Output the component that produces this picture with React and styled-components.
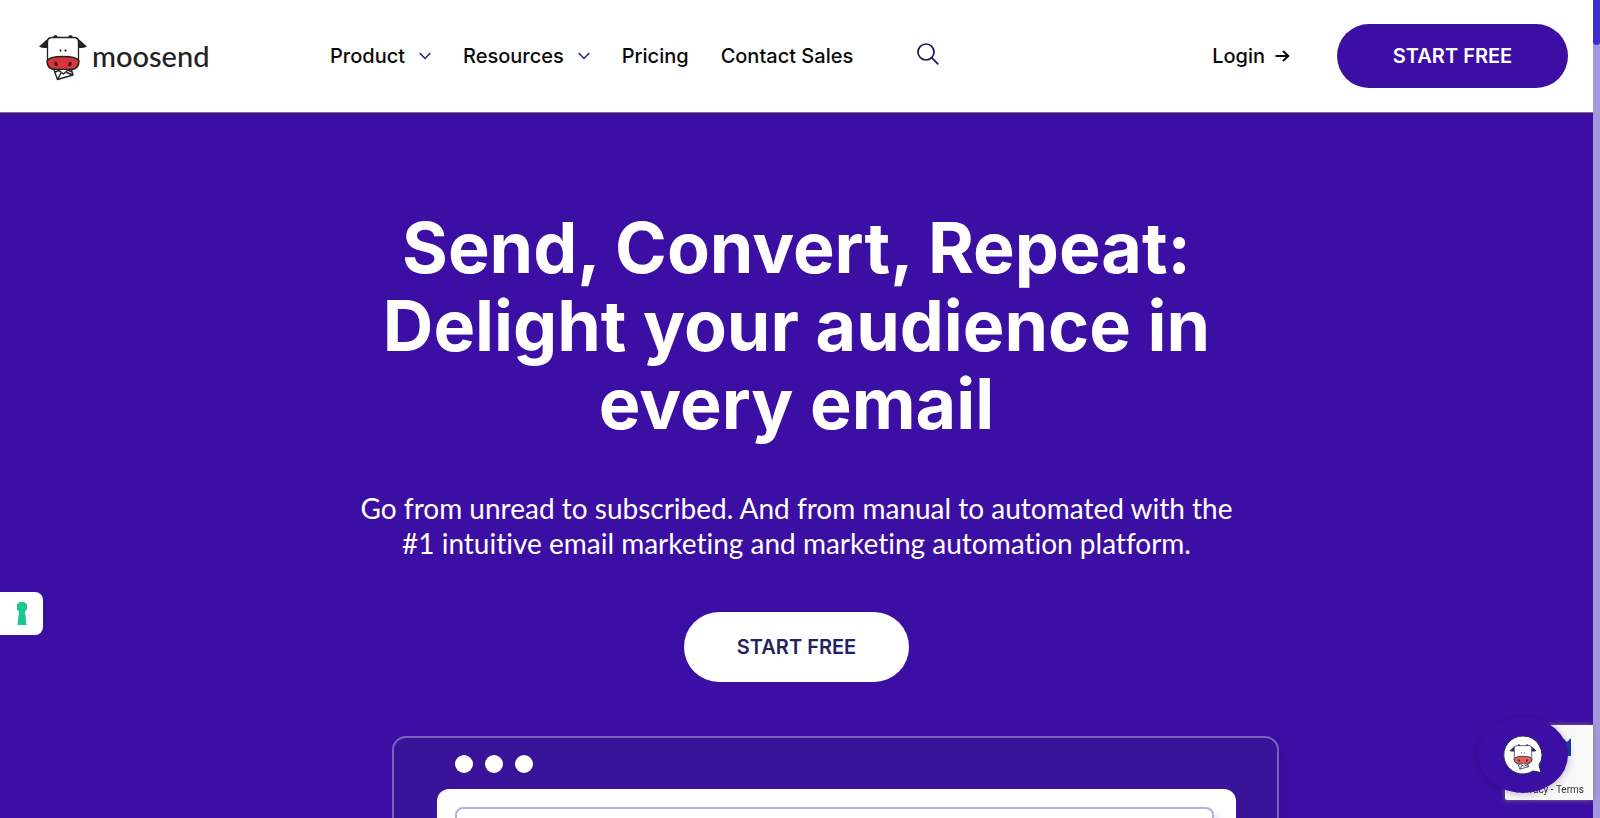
import styled, { createGlobalStyle } from 'styled-components';

const Cow = ({ muzzle = '#d8343a', line = '#222222' }) => (
  <>
    <path d="M10 7.500 L1 15.500 Q6 18 10 16.500 Z" fill={line} />
    <path d="M40 7.500 L49 15.500 Q44 18 40 16.500 Z" fill={line} />
    <path d="M15 7 Q15.500 4 18 4 Q19.500 4.500 20 7 Z M30 7 Q30.500 4.500 32 4 Q34.500 4 35 7 Z" fill={line} />
    <path
      d="M14 6.500 H36 Q40.500 6.500 40.500 11 V30 Q40.500 38 33 38 H17 Q9.500 38 9.500 30 V11 Q9.500 6.500 14 6.500 Z"
      fill="#ffffff"
      stroke={line}
      strokeWidth="1.3"
    />
    <path
      d="M9 30 Q11 25.500 25 25.500 Q39 25.500 41 30 Q41 38.500 32 38.500 H18 Q9 38.500 9 30 Z"
      fill={muzzle}
      stroke={line}
      strokeWidth="1.5"
    />
    <ellipse cx="22.500" cy="19.500" rx="0.9" ry="1.2" fill={line} />
    <ellipse cx="27.500" cy="19.500" rx="0.9" ry="1.2" fill={line} />
    <ellipse cx="18" cy="33" rx="1.6" ry="2.300" fill={line} transform="rotate(-20 18 33)" />
    <ellipse cx="32" cy="33" rx="1.6" ry="2.300" fill={line} transform="rotate(20 32 33)" />
    <path d="M16 39 L34 39 L35 44 L19.500 49 Z" fill="#ffffff" />
    <path
      d="M16 39 L19.500 48.500 L35 44 L33.500 39 M17 41 L21 39.500 L25.500 43 L30 39 L34 41 M19.500 48.500 L23 42 M35 44 L28.500 41.500"
      fill="none"
      stroke={line}
      strokeWidth="1.4"
      strokeLinejoin="round"
    />
  </>
);

const Chevron = () => (
  <svg width="12" height="8" viewBox="0 0 12 8" fill="none" stroke="#1f2466" strokeWidth="1.5" aria-hidden="true">
    <path d="M0.700 1 L6 6.500 L11.300 1" />
  </svg>
);

const App = () => (
  <Page>
    <GlobalStyle />
    <Content>
      <Header>
        <Brand href="#" aria-label="moosend">
          <svg width="50" height="50" viewBox="0 0 50 50" aria-hidden="true">
            <Cow />
          </svg>
          <BrandName>moosend</BrandName>
        </Brand>
        <Nav>
          <NavLink href="#product">
            Product <Chevron />
          </NavLink>
          <NavLink href="#resources">
            Resources <Chevron />
          </NavLink>
          <NavLink href="#pricing">Pricing</NavLink>
          <NavLink href="#contact">Contact Sales</NavLink>
        </Nav>
        <SearchButton aria-label="Search">
          <svg width="22" height="22" viewBox="0 0 22 22" fill="none" stroke="#1b1654" strokeWidth="1.7">
            <circle cx="9" cy="9" r="8" />
            <path d="M14.700 14.700 L21.300 21.300" />
          </svg>
        </SearchButton>
        <Login href="#login">
          Login
          <svg width="15" height="12" viewBox="0 0 15 12" fill="none" stroke="#0a0a0a" strokeWidth="2" aria-hidden="true">
            <path d="M0.500 6 H13 M8 1 L13.300 6 L8 11" />
          </svg>
        </Login>
        <HeaderCta>START FREE</HeaderCta>
      </Header>

      <Hero>
        <Title>Send, Convert, Repeat: Delight your audience in every email</Title>
        <Lead>
          Go from unread to subscribed. And from manual to automated with the #1 intuitive email marketing and
          marketing automation platform.
        </Lead>
        <HeroCta>START FREE</HeroCta>
        <Preview>
          <Dots>
            <Dot />
            <Dot />
            <Dot />
          </Dots>
          <Sheet>
            <SheetFrame />
          </Sheet>
        </Preview>
      </Hero>
    </Content>
    <ScrollTrack>
      <ScrollThumb />
    </ScrollTrack>

    <PrivacyTab aria-label="Privacy preferences">
      <svg width="10" height="23" viewBox="0 0 10 23" fill="#1cc691">
        <path d="M5 0 A5 5 0 0 1 8 9.300 L9.500 23 H0.500 L2 9.300 A5 5 0 0 1 5 0 Z" />
      </svg>
    </PrivacyTab>

    <Captcha>
      <svg width="20" height="42" viewBox="0 0 20 42" aria-hidden="true">
        <path d="M4 4 H12 L15 7 L19 3 V21 H4 Z" fill="#1c3aa9" />
        <path d="M4 32 L13 34 Q11 39 4 40 Z" fill="#ababab" />
      </svg>
      <CaptchaText>
        <a href="#privacy">Privacy</a> - <a href="#terms">Terms</a>
      </CaptchaText>
    </Captcha>

    <ChatButton aria-label="Open chat">
      <svg width="40" height="40" viewBox="0 0 40 40">
        <path
          d="M20 1 A19 19 0 1 0 30 36 L38 37.500 L36 30 A19 19 0 0 0 20 1 Z"
          fill="#ffffff"
          stroke="#27304d"
          strokeWidth="1"
        />
        <svg x="6" y="7" width="28" height="28" viewBox="0 0 50 50">
          <Cow muzzle="#e4604f" line="#27304d" />
        </svg>
      </svg>
    </ChatButton>
  </Page>
);

export default App;

// Styled Components
const GlobalStyle = createGlobalStyle`
  * {
    box-sizing: border-box;
  }
  body {
    margin: 0;
    font-family: Inter, 'Liberation Sans', sans-serif;
    background: #3c0fa4;
  }
  a {
    color: inherit;
    text-decoration: none;
  }
`;

const Page = styled.div`
  display: flex;
  height: 100vh;
  overflow: hidden;
`;

const Content = styled.div`
  flex: 1;
  min-width: 0;
`;

const Header = styled.header`
  display: flex;
  align-items: center;
  height: 113px;
  padding: 0 25px 0 38px;
  background: #ffffff;
  border-bottom: 1px solid #77756f;
`;

const Brand = styled.a`
  display: flex;
  align-items: center;
  gap: 4px;
  width: 292px;
`;

const BrandName = styled.span`
  font-family: Lato, sans-serif;
  font-size: 29px;
  font-weight: 500;
  line-height: 40px;
  color: #222222;
`;

const Nav = styled.nav`
  display: flex;
  gap: 32px;
`;

const NavLink = styled.a`
  display: flex;
  align-items: center;
  gap: 14px;
  font-size: 20px;
  font-weight: 500;
  line-height: 28px;
  color: #0a0a0a;
  white-space: nowrap;
`;

const SearchButton = styled.button`
  display: flex;
  margin-left: 64px;
  padding: 0 0 4px;
  border: none;
  background: none;
  cursor: pointer;
`;

const Login = styled(NavLink)`
  gap: 10px;
  margin-left: auto;
`;

const Pill = styled.button`
  border: none;
  border-radius: 36px;
  font-family: inherit;
  font-size: 20px;
  font-weight: 600;
  line-height: 28px;
  white-space: nowrap;
  cursor: pointer;
`;

const HeaderCta = styled(Pill)`
  width: 231px;
  height: 64px;
  margin-left: 47px;
  background: #3c0fa4;
  color: #ffffff;
`;

const Hero = styled.main`
  display: flex;
  flex-direction: column;
  align-items: center;
  padding: 96px 24px 0;
  color: #ffffff;
`;

const Title = styled.h1`
  max-width: 880px;
  margin: 0;
  font-size: 70px;
  font-weight: 700;
  line-height: 78px;
  text-align: center;
`;

const Lead = styled.p`
  max-width: 896px;
  margin: 48px 0 0;
  font-family: Lato, sans-serif;
  font-size: 28px;
  font-weight: 400;
  font-variant-ligatures: none;
  line-height: 35px;
  text-align: center;
`;

const HeroCta = styled(Pill)`
  width: 225px;
  height: 70px;
  margin-top: 51px;
  background: #ffffff;
  color: #1f2460;
`;

const Preview = styled.section`
  width: 100%;
  max-width: 887px;
  margin: 54px 0 0 78px;
  padding: 17px 41px 0 43px;
  border: 2px solid #7a63bd;
  border-radius: 14px;
  background: #391399;
  box-shadow: 4px 4px 12px rgba(30, 10, 90, 0.2);
`;

const Dots = styled.div`
  display: flex;
  gap: 12px;
  padding-left: 18px;
`;

const Dot = styled.span`
  width: 18px;
  height: 18px;
  border-radius: 50%;
  background: #ffffff;
`;

const Sheet = styled.div`
  height: 480px;
  margin-top: 16px;
  padding: 18px 22px 0 18px;
  border-radius: 12px;
  background: #ffffff;
`;

const SheetFrame = styled.div`
  height: 440px;
  border: 2px solid #b3b1d8;
  border-radius: 8px;
  box-shadow: 4px 6px 10px rgba(60, 15, 164, 0.15);
`;

const ScrollTrack = styled.div`
  width: 7px;
  background: #a398dc;
`;

const ScrollThumb = styled.div`
  height: 45px;
  border-radius: 0 0 4px 4px;
  background: #3f2dc9;
`;

const PrivacyTab = styled.button`
  position: fixed;
  left: 0;
  bottom: 183px;
  display: flex;
  align-items: center;
  justify-content: center;
  width: 43px;
  height: 43px;
  padding: 0;
  border: none;
  border-radius: 0 8px 8px 0;
  background: #ffffff;
  cursor: pointer;
`;

const Captcha = styled.aside`
  position: fixed;
  right: 7px;
  bottom: 18px;
  display: flex;
  flex-direction: column;
  align-items: flex-end;
  justify-content: space-between;
  width: 88px;
  height: 75px;
  padding: 10px 9px 3px;
  border-radius: 2px 0 0 2px;
  background: #f9f9f9;
  box-shadow: 0 0 5px #808080;

  svg {
    margin-right: 12px;
  }
`;

const CaptchaText = styled.span`
  font-family: Roboto, sans-serif;
  font-size: 10px;
  line-height: 14px;
  color: #333333;
  white-space: nowrap;
`;

const ChatButton = styled.button`
  position: fixed;
  right: 32px;
  bottom: 25px;
  display: flex;
  align-items: center;
  justify-content: center;
  width: 90px;
  height: 76px;
  padding: 0;
  border: none;
  border-radius: 50%;
  background: #3c0fa4;
  box-shadow: 0 1px 8px rgba(20, 0, 80, 0.3);
  cursor: pointer;
`;
